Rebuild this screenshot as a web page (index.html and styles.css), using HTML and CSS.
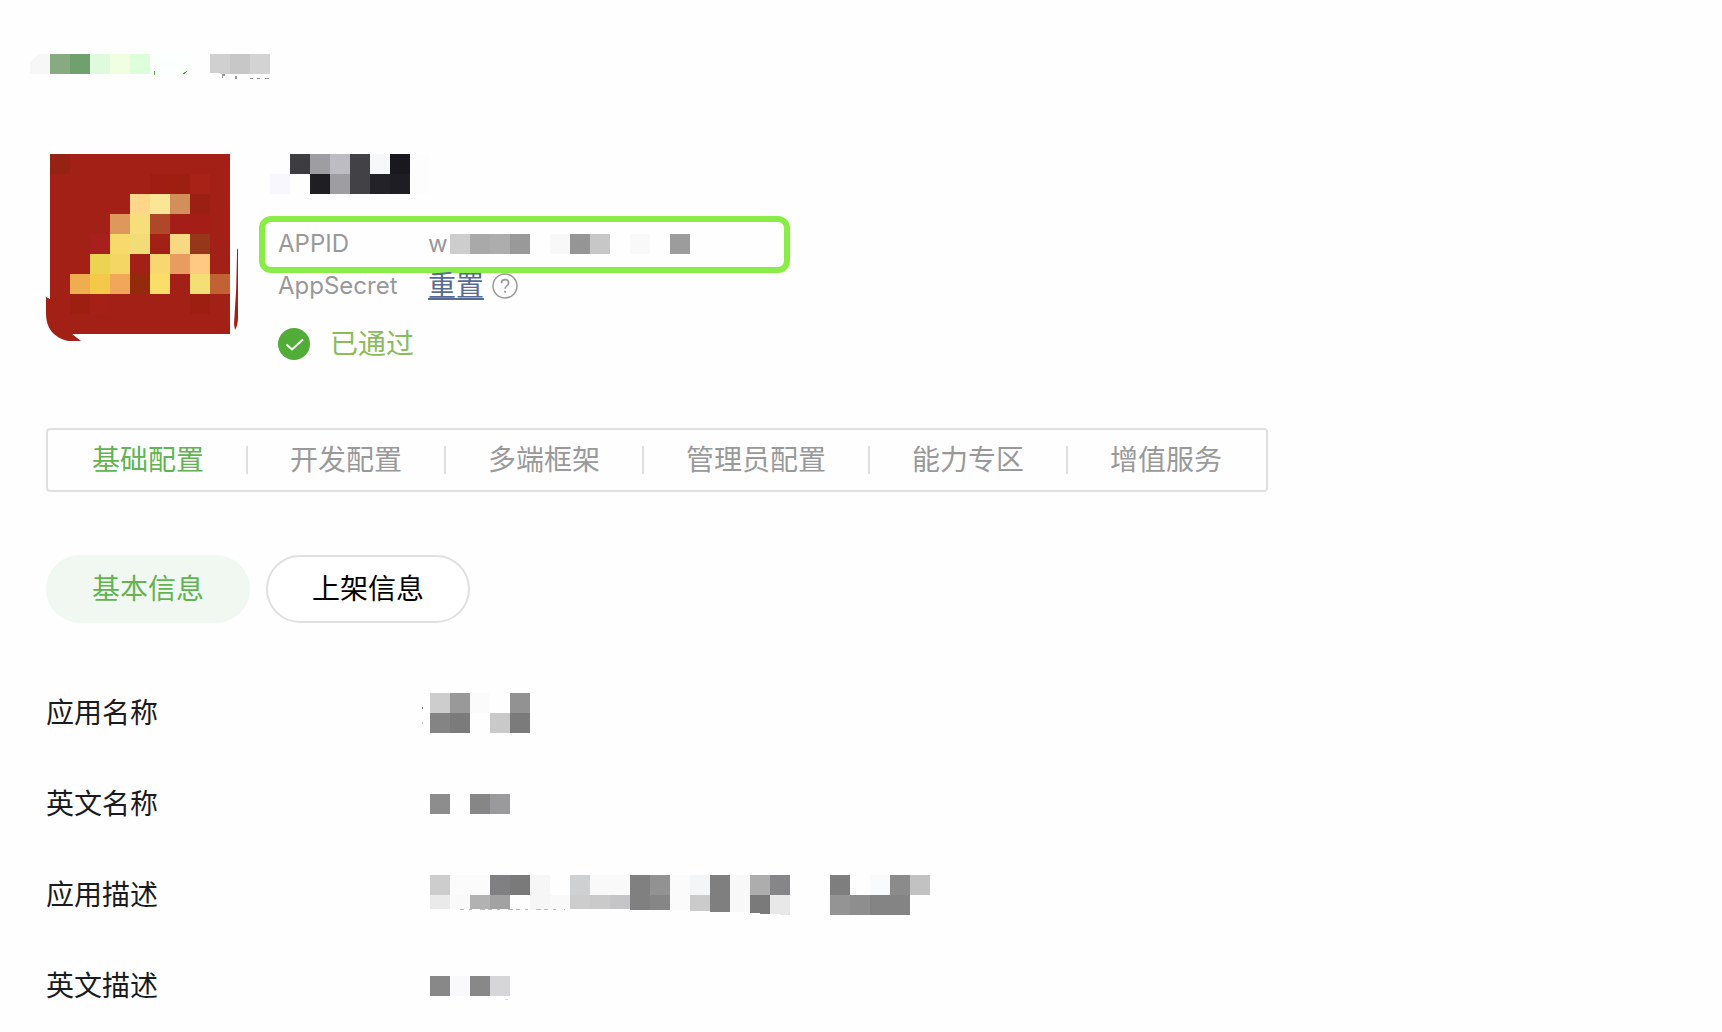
FILE: index.html
```
<!DOCTYPE html>
<html lang="zh-CN">
<head>
    <meta charset="UTF-8">
    <meta name="viewport" content="width=device-width, initial-scale=1.0">
    <title>基础配置</title>
    <link rel="stylesheet" href="styles.css">
</head>
<body>
    <header class="crumbs">
        <svg class="mosaic" width="240" height="26" aria-hidden="true">
            <path fill="#f7f7f7" d="M8 0h12v20H0V8z"/>
            <rect x="20" width="20" height="20" fill="#86ab80"/>
            <rect x="40" width="20" height="20" fill="#71a06f"/>
            <rect x="60" width="20" height="20" fill="#dffadf"/>
            <rect x="80" width="20" height="20" fill="#f0ffe2"/>
            <rect x="100" width="20" height="20" fill="#dcfedb"/>
            <rect x="120" width="40" height="20" fill="#fbfffe"/>
            <path fill="#5aa94c" d="M124 17h1v4h-1zM153 20l1-2 3-1v1l-2 1-1 2z"/>
            <path fill="#d0d0d0" d="M180 0h20v20l-20-1z"/>
            <rect x="200" width="20" height="20" fill="#c7c7c7"/>
            <rect x="220" width="20" height="20" fill="#d3d3d3"/>
            <path fill="#999" d="M192 20h3v2h-2v2h-1zM205 22h2v3h-2zM220 24h3v1h-3zM227 24h3v1h-3zM235 24h4v1h-4z"/>
        </svg>
    </header>

    <section class="profile">
        <svg class="app-icon" width="192" height="192" viewBox="46 154 192 192" role="img" aria-label="应用图标">
            <path fill="#a22015" d="M50 154h180v180H72l9 7H68C54 338 46 328 46 314v-17l4 2z"/>
            <path fill="#a22015" d="M238 248v70q0 7-3 12l-1-6q3-36 3-74z"/>
            <g class="mosaic">
                <rect x="50" y="154" width="20" height="20" fill="#962214"/>
                <rect x="150" y="174" width="20" height="20" fill="#a01d14"/>
                <rect x="170" y="174" width="20" height="20" fill="#9e1f12"/>
                <rect x="190" y="174" width="20" height="20" fill="#a82217"/>
                <rect x="130" y="194" width="20" height="20" fill="#ffd68a"/>
                <rect x="150" y="194" width="20" height="20" fill="#fbe695"/>
                <rect x="170" y="194" width="20" height="20" fill="#d28f5c"/>
                <rect x="190" y="194" width="20" height="20" fill="#9a2013"/>
                <rect x="110" y="214" width="20" height="20" fill="#df985c"/>
                <rect x="130" y="214" width="20" height="20" fill="#f6df7b"/>
                <rect x="150" y="214" width="20" height="20" fill="#ae4829"/>
                <rect x="170" y="214" width="40" height="20" fill="#a41e17"/>
                <rect x="90" y="234" width="20" height="20" fill="#a7201e"/>
                <rect x="110" y="234" width="20" height="20" fill="#f8da6c"/>
                <rect x="130" y="234" width="20" height="20" fill="#f2dc78"/>
                <rect x="170" y="234" width="20" height="20" fill="#f8d983"/>
                <rect x="190" y="234" width="20" height="20" fill="#96371c"/>
                <rect x="90" y="254" width="20" height="20" fill="#edd354"/>
                <rect x="110" y="254" width="20" height="20" fill="#f4d665"/>
                <rect x="150" y="254" width="20" height="20" fill="#f7d772"/>
                <rect x="170" y="254" width="20" height="20" fill="#e99c5f"/>
                <rect x="190" y="254" width="20" height="20" fill="#ffc984"/>
                <rect x="70" y="274" width="20" height="20" fill="#eeae50"/>
                <rect x="90" y="274" width="20" height="20" fill="#f4c94a"/>
                <rect x="110" y="274" width="20" height="20" fill="#f1a65a"/>
                <rect x="130" y="274" width="20" height="20" fill="#922a0b"/>
                <rect x="150" y="274" width="20" height="20" fill="#fbde69"/>
                <rect x="190" y="274" width="20" height="20" fill="#f4de76"/>
                <rect x="210" y="274" width="20" height="20" fill="#c26134"/>
                <rect x="70" y="294" width="20" height="20" fill="#9e1f12"/>
                <rect x="90" y="294" width="20" height="20" fill="#a52017"/>
                <rect x="190" y="294" width="20" height="20" fill="#9c1f12"/>
            </g>
        </svg>

        <div class="info">
            <svg class="app-name mosaic" width="160" height="40" aria-hidden="true">
                <rect y="20" width="20" height="20" fill="#f7f7fd"/>
                <rect x="20" width="20" height="20" fill="#3d3c41"/>
                <rect x="40" width="20" height="20" fill="#9e9da2"/>
                <rect x="60" width="20" height="20" fill="#bdbcc3"/>
                <rect x="80" width="20" height="40" fill="#424146"/>
                <rect x="100" width="20" height="20" fill="#f7f8fa"/>
                <rect x="120" width="20" height="20" fill="#19181e"/>
                <rect x="40" y="20" width="20" height="20" fill="#1f1e22"/>
                <rect x="60" y="20" width="20" height="20" fill="#9e9da2"/>
                <rect x="100" y="20" width="20" height="20" fill="#232228"/>
                <rect x="120" y="20" width="20" height="20" fill="#1e1d21"/>
                <rect x="140" width="20" height="40" fill="#fdfdfd"/>
            </svg>

            <div class="info-row highlight">
                <span class="info-label">APPID</span>
                <span class="appid">w</span>
                <svg class="mosaic" width="240" height="20" aria-hidden="true">
                    <rect width="20" height="20" fill="#cdcdcd"/>
                    <rect x="20" width="20" height="20" fill="#a9a9a9"/>
                    <rect x="40" width="20" height="20" fill="#adadad"/>
                    <rect x="60" width="20" height="20" fill="#999"/>
                    <rect x="100" width="20" height="20" fill="#f8f8f8"/>
                    <rect x="120" width="20" height="20" fill="#959595"/>
                    <rect x="140" width="20" height="20" fill="#c7c7c7"/>
                    <rect x="180" width="20" height="20" fill="#f9f9f9"/>
                    <rect x="220" width="20" height="20" fill="#9c9c9c"/>
                </svg>
            </div>

            <div class="info-row">
                <span class="info-label">AppSecret</span>
                <a href="#" class="reset">重置</a>
                <svg class="help" width="26" height="26" viewBox="0 0 26 26" fill="none" stroke="#999" role="img" aria-label="帮助">
                    <circle cx="13" cy="13" r="12" stroke-width="1.5"/>
                    <path stroke-width="1.7" d="M9.5 10.2c0-2.1 1.5-3.5 3.6-3.5s3.5 1.3 3.5 3.2c0 1.400-.7 2.200-1.800 3-1.200.9-1.700 1.500-1.700 2.800"/>
                    <circle cx="13.100" cy="18.800" r="1.100" fill="#999" stroke="none"/>
                </svg>
            </div>

            <div class="status">
                <svg width="32" height="32" viewBox="0 0 32 32" aria-hidden="true">
                    <circle cx="16" cy="16" r="16" fill="#51ac38"/>
                    <path d="M8.500 16.500l5.500 5 11-10" fill="none" stroke="#fff" stroke-width="2"/>
                </svg>
                <span>已通过</span>
            </div>
        </div>
    </section>

    <nav class="tabs">
        <a href="#" class="tab active">基础配置</a>
        <a href="#" class="tab">开发配置</a>
        <a href="#" class="tab">多端框架</a>
        <a href="#" class="tab">管理员配置</a>
        <a href="#" class="tab">能力专区</a>
        <a href="#" class="tab">增值服务</a>
    </nav>

    <div class="pills">
        <button type="button" class="pill active">基本信息</button>
        <button type="button" class="pill">上架信息</button>
    </div>

    <dl class="details">
        <dt>应用名称</dt>
        <dd>
            <svg class="mosaic" width="100" height="40" aria-hidden="true">
                <rect width="20" height="20" fill="#cdcdcd"/>
                <rect x="20" width="20" height="20" fill="#999"/>
                <rect x="40" width="20" height="20" fill="#fbfbfb"/>
                <rect x="80" width="20" height="20" fill="#929292"/>
                <rect y="20" width="20" height="20" fill="#848484"/>
                <rect x="20" y="20" width="20" height="20" fill="#7b7b7b"/>
                <rect x="60" y="20" width="20" height="20" fill="#c9c9c9"/>
                <rect x="80" y="20" width="20" height="20" fill="#7b7b7b"/>
                <path fill="#777" d="M-8 14h1v2h-1z"/>
                <path fill="#ccc" d="M-8 29h1v2h-1z"/>
            </svg>
        </dd>
        <dt>英文名称</dt>
        <dd>
            <svg class="mosaic" width="80" height="20" aria-hidden="true">
                <rect width="20" height="20" fill="#8d8d8d"/>
                <rect x="40" width="20" height="20" fill="#868686"/>
                <rect x="60" width="20" height="20" fill="#9a9a9c"/>
            </svg>
        </dd>
        <dt>应用描述</dt>
        <dd>
            <svg class="mosaic" width="500" height="40" aria-hidden="true">
                <rect width="20" height="20" fill="#cdcdcd"/>
                <rect x="20" width="40" height="20" fill="#fbfbfb"/>
                <rect x="60" width="20" height="20" fill="#808082"/>
                <rect x="80" width="20" height="20" fill="#7a7a7a"/>
                <rect x="100" width="20" height="35" fill="#f6f6f6"/>
                <rect x="140" width="20" height="20" fill="#cfd0d2"/>
                <rect x="160" width="40" height="20" fill="#f9f9f9"/>
                <rect x="200" width="20" height="35" fill="#808080"/>
                <rect x="220" width="20" height="20" fill="#929292"/>
                <rect x="240" width="20" height="35" fill="#fbfbfb"/>
                <rect x="260" width="20" height="20" fill="#f4f5f7"/>
                <rect x="280" width="20" height="37" fill="#7f7f7f"/>
                <rect x="300" width="20" height="37" fill="#f8f8f8"/>
                <rect x="320" width="20" height="20" fill="#adadad"/>
                <rect x="340" width="20" height="20" fill="#868688"/>
                <rect x="400" width="20" height="20" fill="#7e7e7e"/>
                <rect x="440" width="20" height="20" fill="#f9fafc"/>
                <rect x="460" width="20" height="20" fill="#8b8b8b"/>
                <rect x="480" width="20" height="20" fill="#c2c2c2"/>
                <rect y="20" width="20" height="14" fill="#eaeaea"/>
                <rect x="20" y="20" width="20" height="14" fill="#f9f9f9"/>
                <rect x="40" y="20" width="20" height="14" fill="#b2b2b2"/>
                <rect x="60" y="20" width="20" height="14" fill="#a2a2a2"/>
                <rect x="120" y="20" width="20" height="14" fill="#f9f9f9"/>
                <rect x="140" y="20" width="20" height="14" fill="#cdcdcd"/>
                <rect x="160" y="20" width="20" height="14" fill="#cacaca"/>
                <rect x="180" y="20" width="20" height="14" fill="#c5c5c7"/>
                <rect x="220" y="20" width="20" height="15" fill="#868686"/>
                <rect x="260" y="20" width="20" height="16" fill="#cbcbcb"/>
                <path fill="#7a7a7a" d="M320 20h20v19l-20-1z"/>
                <path fill="#e8e8e8" d="M340 20h20v20l-20-1z"/>
                <rect x="400" y="20" width="20" height="20" fill="#949494"/>
                <rect x="420" y="20" width="20" height="20" fill="#8e8e8e"/>
                <rect x="440" y="20" width="40" height="20" fill="#848484"/>
                <path stroke="#bbb" stroke-dasharray="4 5 3 8 5 3" d="M30 34.500h105"/>
            </svg>
        </dd>
        <dt>英文描述</dt>
        <dd>
            <svg class="mosaic" width="80" height="20" aria-hidden="true">
                <rect width="20" height="20" fill="#888"/>
                <rect x="20" width="20" height="20" fill="#f9f9fc"/>
                <rect x="40" width="20" height="20" fill="#888"/>
                <rect x="60" width="20" height="20" fill="#d6d6d8"/>
                <path fill="#ddd" d="M75 23h3v1h-3z"/>
            </svg>
        </dd>
    </dl>
</body>
</html>
```
FILE: styles.css
```
* {
    box-sizing: border-box;
}

body {
    margin: 0;
    padding: 54px 46px 0;
    background: #fefefe;
    color: #1a1b1c;
    font-family: Inter, "Noto Sans CJK SC", sans-serif;
    font-size: 28px;
    line-height: 40px;
}

a {
    color: inherit;
    text-decoration: none;
}

svg {
    display: block;
    flex: none;
    overflow: visible;
}

.mosaic {
    shape-rendering: crispEdges;
}

.crumbs {
    height: 26px;
    margin-left: -16px;
}

/* app header */
.profile {
    display: flex;
    gap: 40px;
    margin-top: 74px;
}

.info {
    width: 512px;
    color: #999;
}

.app-name {
    margin: 0 0 22px -8px;
}

.info-row {
    display: flex;
    align-items: center;
    height: 26px;
}

.info-row.highlight {
    height: 57px;
    margin-left: -19px;
    padding: 0 13px 2px;
    border: 6px solid #8aed47;
    border-radius: 12px;
}

.info-label {
    width: 150px;
    font-size: 24px;
}

.appid {
    width: 22px;
    font-size: 24px;
}

.reset {
    color: #576b95;
    text-decoration: underline;
    text-decoration-thickness: 2px;
    text-underline-offset: 2px;
}

.help {
    margin-left: 8px;
}

.status {
    display: flex;
    align-items: center;
    gap: 20px;
    height: 32px;
    margin-top: 29px;
    color: #8bbb5b;
}

/* tabs */
.tabs {
    display: flex;
    align-items: center;
    width: fit-content;
    height: 64px;
    margin-top: 68px;
    padding: 0 2px;
    border: 2px solid #e0e0e0;
    border-radius: 4px;
    color: #999;
}

.tab {
    padding: 0 42px;
    line-height: 28px;
    white-space: nowrap;
}

.tab + .tab {
    border-left: 2px solid #e0e0e0;
}

.tab.active {
    color: #61b354;
}

.pills {
    display: flex;
    gap: 16px;
    margin-top: 63px;
}

.pill {
    height: 68px;
    padding: 0 44px;
    border: 2px solid #e0e0e0;
    border-radius: 34px;
    background: #fff;
    color: #000;
    font: inherit;
    cursor: pointer;
}

.pill.active {
    border-color: #f1f8f1;
    background: #f1f8f1;
    color: #61b354;
}

/* app details */
.details {
    display: grid;
    grid-template-columns: 384px 1fr;
    grid-auto-rows: 40px;
    row-gap: 51px;
    align-items: center;
    margin: 70px 0 0;
}

.details dd {
    margin: 0;
}
```
